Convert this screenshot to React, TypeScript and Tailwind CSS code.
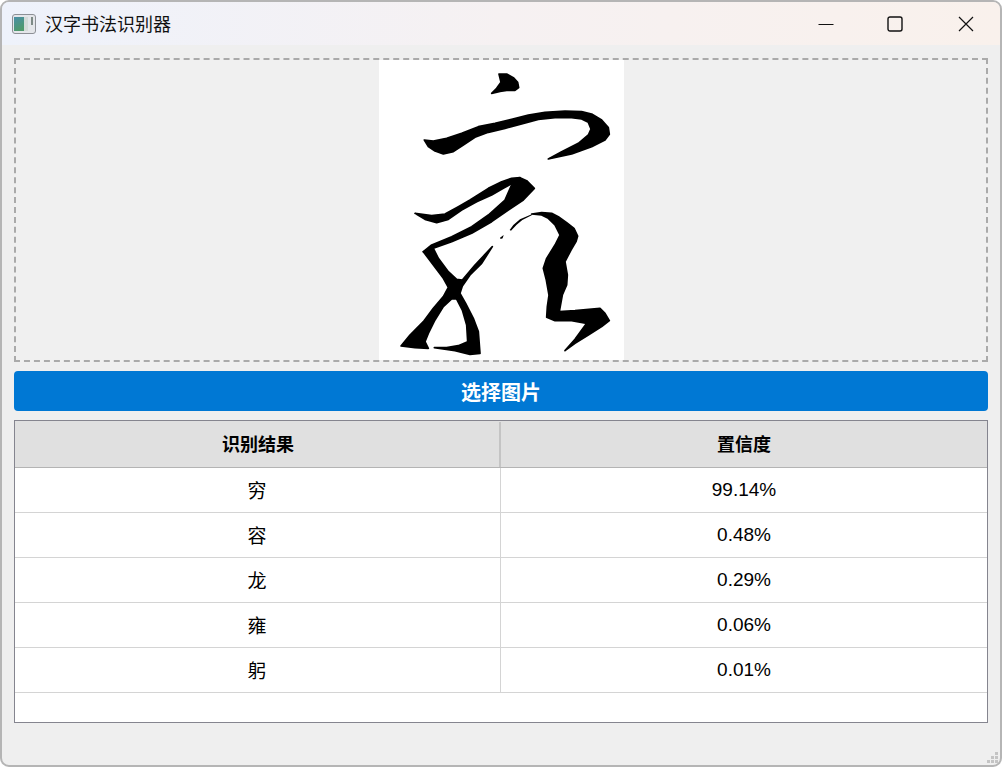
const font = '[font-family:"Open_Sans","Noto_Sans_CJK_SC",sans-serif]';
const latin = '[font-family:"Liberation_Sans","Noto_Sans_CJK_SC",sans-serif]';

const rows = [
  ["穷", "99.14%"],
  ["容", "0.48%"],
  ["龙", "0.29%"],
  ["雍", "0.06%"],
  ["躬", "0.01%"],
];

function Calligraphy() {
  return (
    <svg width="245" height="300" viewBox="379 60 245 300" className="block">
      <defs>
        <filter id="soft" x="-5%" y="-5%" width="110%" height="110%">
          <feGaussianBlur stdDeviation="0.4" />
        </filter>
      </defs>
      <rect x="379" y="60" width="245" height="300" fill="#fff" />
      <g filter="url(#soft)">
        <g transform="translate(375 55) scale(0.33333)" fill="#000" stroke="#000" strokeWidth="5" strokeLinejoin="round">
          <polygon points="372,57 395,57 415,68 428,82 431,98 420,106 395,106 375,109 350,115 365,100 378,82" />
          <polygon points="148,255 175,258 215,250 260,235 310,215 360,205 410,193 460,180 510,172 570,168 620,170 650,177 680,195 700,218 703,238 690,255 650,275 590,297 520,312 560,290 610,265 640,240 648,222 640,202 620,192 590,188 540,188 490,193 440,207 390,220 340,232 300,247 265,270 235,290 205,297 180,288 160,275" />
        </g>
        <g transform="translate(375 200) scale(0.33333)" fill="#000" stroke="#000" strokeWidth="5" strokeLinejoin="round">
          <polygon points="120,40 170,47 210,42 250,20 285,0 340,-35 380,-55 410,-65 435,-67 412,-50 385,-35 350,-15 305,5 260,30 220,58 185,68 150,58" />
          <polygon points="435,-67 455,-58 478,-35 445,0 400,30 350,65 290,100 230,125 175,145 145,155 170,135 230,110 290,80 340,45 390,0 412,-50" />
          <polygon points="145,155 175,145 190,175 220,215 245,238 262,240 300,195 352,140 320,190 285,225 262,258 255,280 272,310 295,355 310,395 315,460 285,463 240,452 178,443 215,443 250,437 278,425 275,375 262,330 245,297 230,297 205,320 180,360 160,400 150,425 160,445 120,443 78,438 105,405 145,365 175,325 205,290 220,262 205,235 175,195" />
          <polygon points="470,42 500,38 530,40 550,50 575,68 597,85 608,108 603,125 588,150 570,185 577,225 575,255 562,285 553,335 600,332 675,325 690,340 703,362 680,380 640,405 600,430 570,452 600,418 635,370 590,362 540,362 515,352 517,320 522,285 514,240 505,205 515,175 540,135 555,105 540,75 520,55 500,45" />
        </g>
        <g transform="translate(375 200) scale(0.33333)" fill="#000">
          <polygon points="404,90 415,75 435,58 472,42 470,46 442,60 425,74 408,92" />
          <polygon points="375,113 386,105 383,115 377,117" />
        </g>
      </g>
    </svg>
  );
}

function AppIcon() {
  return (
    <svg width="24" height="20" viewBox="0 0 24 20" className="block">
      <defs>
        <linearGradient id="g1" x1="0" y1="0" x2="0.4" y2="1">
          <stop offset="0" stopColor="#4a8fa8" />
          <stop offset="1" stopColor="#4f9a6c" />
        </linearGradient>
      </defs>
      <rect x="0.5" y="0.5" width="23" height="19" rx="2.5" fill="#e4e6ea" stroke="#8d9096" />
      <rect x="2" y="3" width="10" height="14" fill="url(#g1)" />
      <rect x="12" y="3" width="4" height="14" fill="#d4dbd8" />
      <rect x="19" y="3" width="2" height="8" fill="#7d8a86" />
    </svg>
  );
}

export default function App() {
  return (
    <div className={`h-[767px] w-[1002px] bg-white text-black ${font}`}>
      <div className="relative flex h-full w-full flex-col overflow-hidden rounded-[9px] border-2 border-[#b5b5b5] bg-[#efefef]">
        <div className="flex h-[43px] shrink-0 items-center bg-gradient-to-r from-[#eef2fb] via-[#f6f1f2] to-[#f9f1ec] pl-[10px]">
          <AppIcon />
          <span className="ml-[9px] text-[18px] leading-none text-[#111]">汉字书法识别器</span>
          <div className="ml-auto flex items-center pr-[26px]">
            <svg width="16" height="16" viewBox="0 0 16 16" className="mr-[53px]">
              <path d="M0.5 8.5H15.5" stroke="#111" strokeWidth="1" />
            </svg>
            <svg width="16" height="16" viewBox="0 0 16 16" className="mr-[55px]">
              <rect x="1" y="1" width="14" height="14" rx="2" fill="none" stroke="#111" strokeWidth="1.4" />
            </svg>
            <svg width="16" height="16" viewBox="0 0 16 16">
              <path d="M1 1L15 15M15 1L1 15" stroke="#111" strokeWidth="1.2" />
            </svg>
          </div>
        </div>

        <div className="flex flex-1 flex-col px-[12px] pt-[13px]">
          <div className="flex h-[304px] shrink-0 items-center justify-center border-2 border-dashed border-[#aaaaaa] bg-[#f0f0f0]">
            <Calligraphy />
          </div>

          <div className="mt-[9px] flex h-[40px] shrink-0 items-center justify-center rounded-[4px] bg-[#0078d4] pt-[3px] text-[20px] font-bold text-white">
            选择图片
          </div>

          <div className="mt-[9px] flex h-[303px] shrink-0 flex-col border border-[#85858f] bg-white text-[18px]">
            <div className="grid h-[47px] shrink-0 grid-cols-[486px_1fr] border-b border-[#b4b4b4] bg-[#e0e0e0] pt-[1px] font-bold">
              <div className="flex items-center justify-center border-r-2 border-[#c4c4c4] pl-[2px]">识别结果</div>
              <div className="flex items-center justify-center">置信度</div>
            </div>
            {rows.map(([c, p]) => (
              <div key={c} className="grid h-[45px] shrink-0 grid-cols-[486px_1fr] border-b border-[#d4d4d4]">
                <div className="flex items-center justify-center border-r border-[#d4d4d4] pr-[1px] pt-[2px] text-[19px]">{c}</div>
                <div className={`flex items-center justify-center pt-[1px] text-[19px] ${latin}`}>{p}</div>
              </div>
            ))}
          </div>
        </div>

        <svg width="12" height="12" viewBox="0 0 12 12" className="absolute bottom-[1px] right-[1px]" fill="#c4c4c4">
          <rect x="8" y="0" width="3" height="3" />
          <rect x="4" y="4" width="3" height="3" />
          <rect x="8" y="4" width="3" height="3" />
          <rect x="0" y="8" width="3" height="3" />
          <rect x="4" y="8" width="3" height="3" />
          <rect x="8" y="8" width="3" height="3" />
        </svg>
      </div>
    </div>
  );
}
